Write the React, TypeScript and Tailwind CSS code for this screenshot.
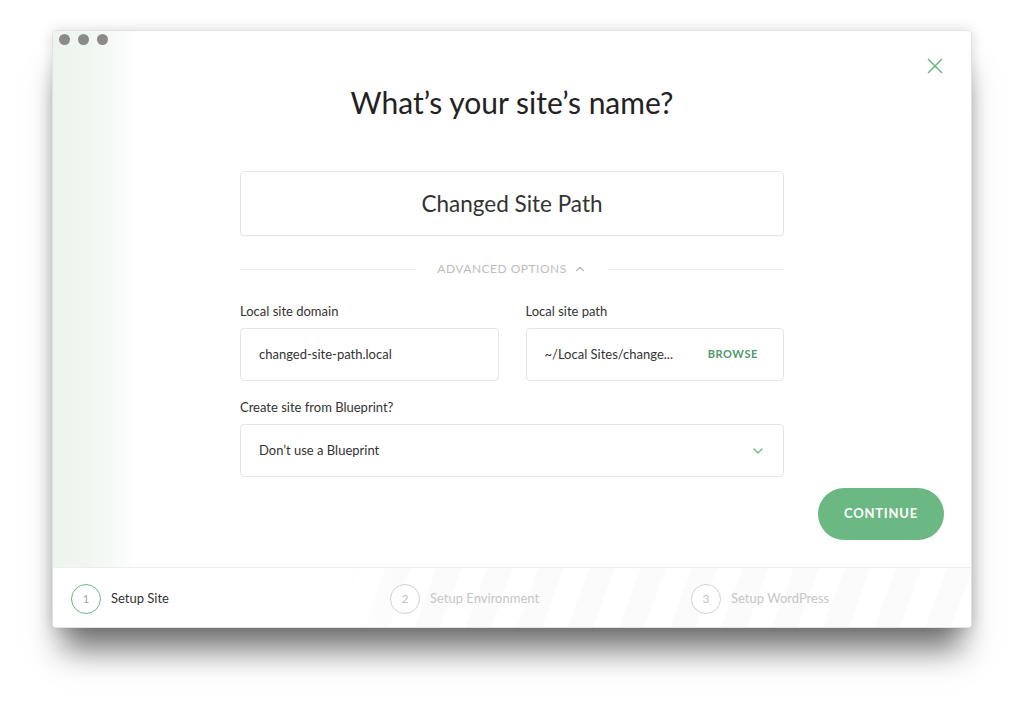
import { X, ChevronUp, ChevronDown } from "lucide-react";

const steps = [
  { n: 1, label: "Setup Site", active: true, w: "w-[319px]" },
  { n: 2, label: "Setup Environment", active: false, w: "w-[301px]" },
  { n: 3, label: "Setup WordPress", active: false, w: "w-[240px]" },
];

export default function App() {
  return (
    <div className="min-h-screen w-[1024px] h-[702px] bg-white pt-[30px] pl-[52px] font-['Lato',sans-serif]">
      <div className="relative w-[920px] h-[598px] flex flex-col bg-white rounded-[4px] border border-[#e2e2e2] shadow-[0_32px_30px_-10px_rgba(0,0,0,0.55),0_0_14px_rgba(0,0,0,0.14)] overflow-hidden">
        {/* Main */}
        <div className="relative flex-1 flex flex-col bg-[linear-gradient(90deg,#ecf4ed_0px,#f0f7f1_35px,#f6faf7_60px,#ffffff_85px)]">
          {/* window chrome */}
          <div className="absolute left-[6px] top-[3px] flex gap-[8px]">
            <span className="w-[11px] h-[11px] rounded-full bg-[#8a8a8a]" />
            <span className="w-[11px] h-[11px] rounded-full bg-[#8a8a8a]" />
            <span className="w-[11px] h-[11px] rounded-full bg-[#8a8a8a]" />
          </div>
          <button className="absolute right-[23px] top-[22px] text-[#6cb883]">
            <X className="w-[26px] h-[26px]" strokeWidth={1.5} />
          </button>

          <h1 className="mt-[53px] text-center text-[30px] leading-[36px] text-[#222]">
            What’s your site’s name?
          </h1>

          <div className="w-[544px] mx-auto flex flex-col">
            <div className="mt-[51px] h-[65px] rounded-[4px] border border-[#e6e6e6] shadow-[0_1px_2px_rgba(0,0,0,0.04)] flex items-center justify-center text-[22.5px] text-[#333]">
              Changed Site Path
            </div>

            <div className="mt-[25px] flex items-center h-[16px]">
              <div className="flex-1 h-px bg-[#ececec]" />
              <div className="flex items-center gap-[6px] px-[21px] text-[12px] tracking-[0.5px] text-[#bdbdbd]">
                ADVANCED OPTIONS
                <ChevronUp className="w-[14px] h-[14px]" strokeWidth={2} />
              </div>
              <div className="flex-1 h-px bg-[#ececec]" />
            </div>

            <div className="mt-[26px] grid grid-cols-2 gap-[27px]">
              <div className="flex flex-col">
                <label className="text-[13px] leading-[16px] text-[#333]">Local site domain</label>
                <div className="mt-[9px] h-[53px] rounded-[4px] border border-[#e6e6e6] flex items-center pl-[18px] text-[13px] text-[#333]">
                  changed-site-path.local
                </div>
              </div>
              <div className="flex flex-col">
                <label className="text-[13px] leading-[16px] text-[#333]">Local site path</label>
                <div className="mt-[9px] h-[53px] rounded-[4px] border border-[#e6e6e6] flex items-center justify-between pl-[18px] pr-[25px] text-[13px] text-[#333]">
                  <span>~/Local Sites/change...</span>
                  <span className="text-[11px] font-bold tracking-[0.6px] text-[#4f9a69]">BROWSE</span>
                </div>
              </div>
            </div>

            <label className="mt-[18px] text-[13px] leading-[16px] text-[#333]">Create site from Blueprint?</label>
            <div className="mt-[9px] h-[53px] rounded-[4px] border border-[#e6e6e6] flex items-center justify-between pl-[18px] pr-[17px] text-[13px] text-[#333]">
              <span>Don’t use a Blueprint</span>
              <ChevronDown className="w-[16px] h-[16px] text-[#6cb883]" strokeWidth={2} />
            </div>
          </div>

          <div className="mt-[11px] flex justify-end pr-[27px]">
            <button className="w-[126px] h-[52px] rounded-full bg-[#6cb883] text-white text-[13px] font-bold tracking-[0.8px]">
              CONTINUE
            </button>
          </div>
        </div>

        {/* Footer steps */}
        <div className="h-[60px] shrink-0 border-t border-[#ededed] flex items-center pl-[18px] bg-[linear-gradient(90deg,#ffffff_290px,rgba(255,255,255,0)_350px),repeating-linear-gradient(110deg,#ffffff_0px,#ffffff_24px,#fbfbfb_24px,#fbfbfb_48px)]">
          {steps.map((s) => (
            <div key={s.n} className={`${s.w} flex items-center gap-[10px] pt-[2px]`}>
              <span
                className={
                  s.active
                    ? "w-[30px] h-[30px] rounded-full border-[1.5px] border-[#6cb883] bg-white flex items-center justify-center text-[12px] text-[#aaa]"
                    : "w-[30px] h-[30px] rounded-full border-[1.5px] border-[#d2d2d2] bg-white flex items-center justify-center text-[12px] text-[#c4c4c4]"
                }
              >
                {s.n}
              </span>
              <span className={s.active ? "text-[13px] text-[#333]" : "text-[13px] text-[#c6c6c6]"}>
                {s.label}
              </span>
            </div>
          ))}
        </div>
      </div>
    </div>
  );
}
